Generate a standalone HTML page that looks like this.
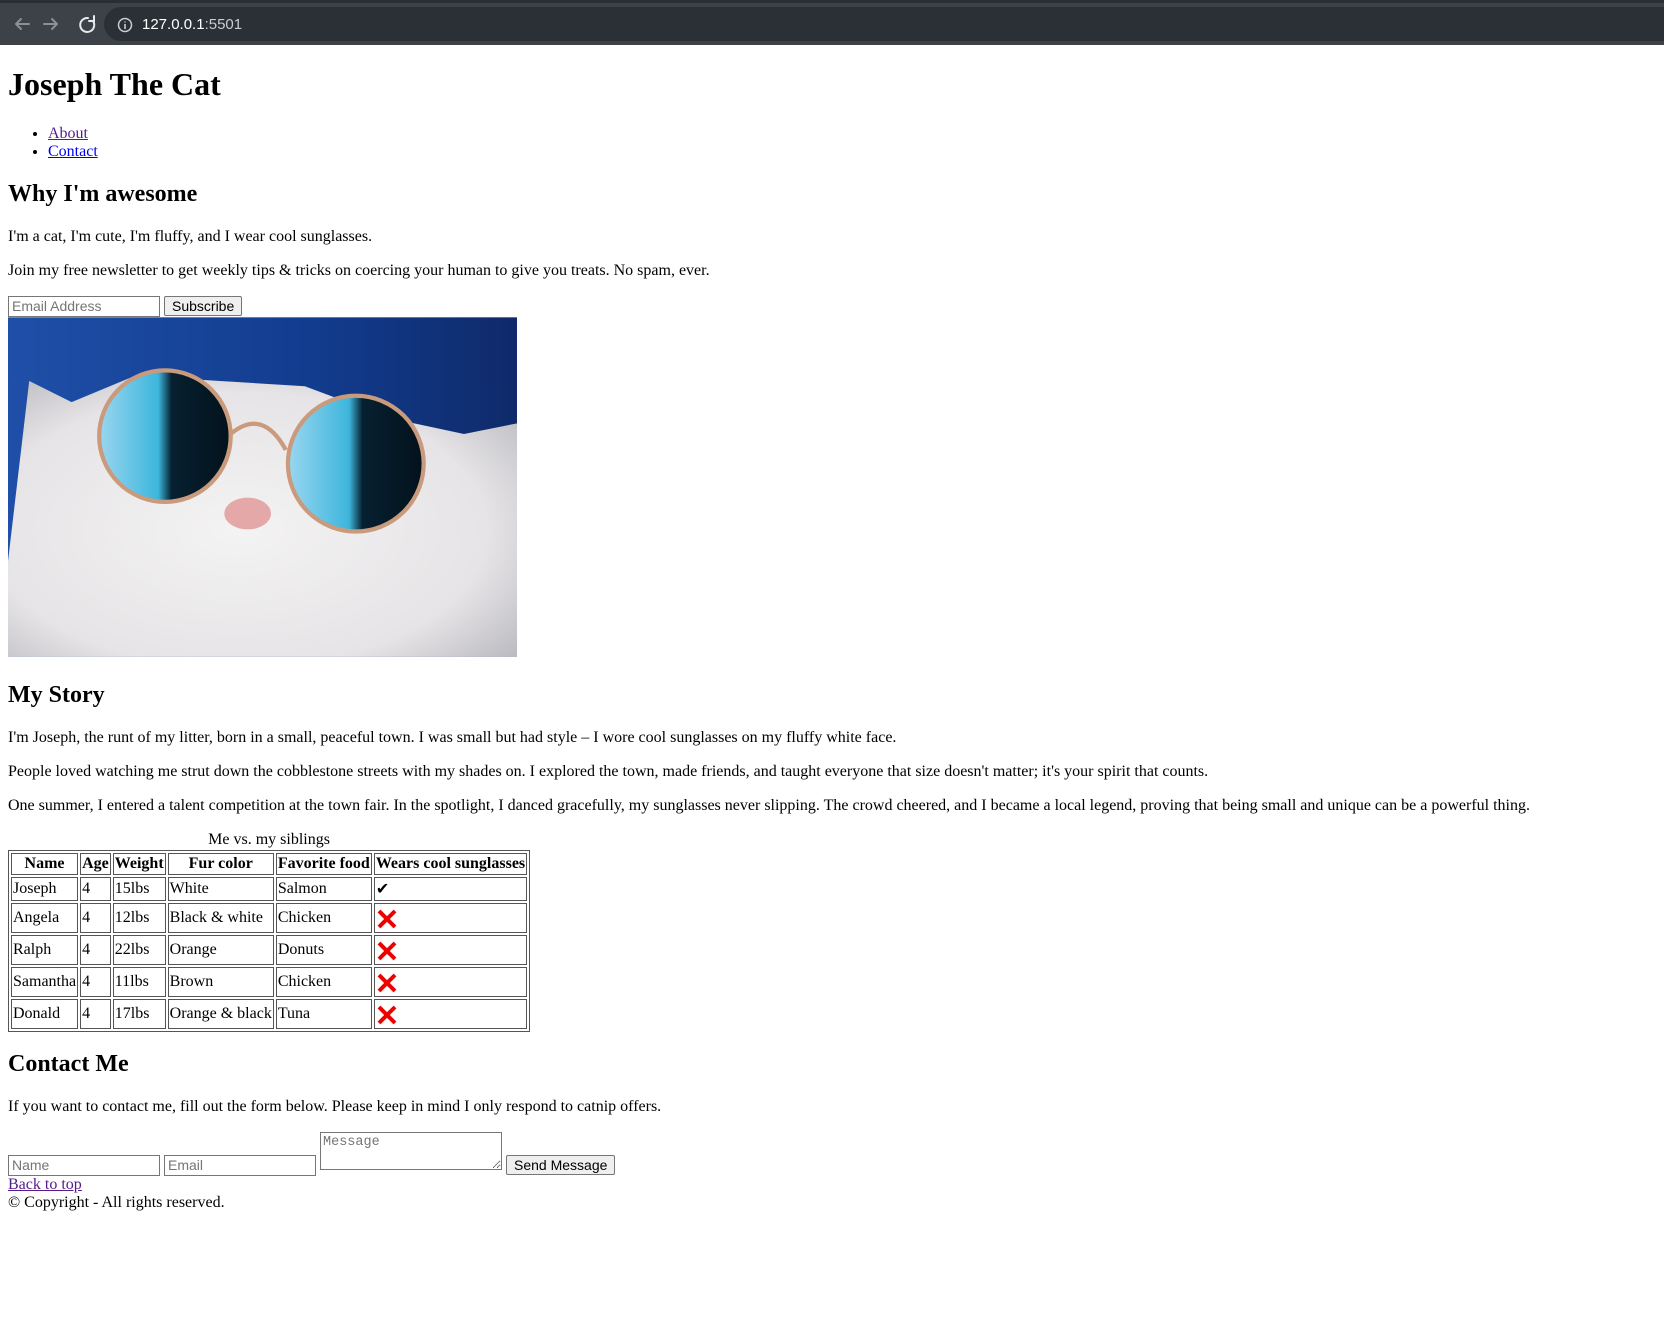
<!DOCTYPE html>
<html><head><meta charset="utf-8"><style>
html,body{margin:0;padding:0;background:#fff}
.bar{height:45px;background:#3c4248;position:relative;border-top:3px solid #2a2e33;box-sizing:border-box}
.pill{position:absolute;left:104px;top:4px;right:0;height:34px;background:#2b3036;border-radius:17px 0 0 17px}
.bar span{position:absolute;color:#c9cdd1;font:15px "Liberation Sans",sans-serif}
.page{margin:8px;font-family:"Liberation Serif",serif;font-size:16px;color:#000}
h1{font-size:2em;margin:.67em 0}
h2{font-size:1.5em;margin:.83em 0}
p{margin:1em 0}
ul{margin:1em 0;padding-left:40px}
a{color:#0000ee}
a.v{color:#551a8b}
input,button,textarea{font-family:"Liberation Sans",sans-serif;font-size:14px;margin:0}
input{border:1px solid #767676;padding:1px 3px;width:144px;height:17px}
button{border:1px solid #767676;border-radius:2px;background:#efefef;padding:1px 7px}
textarea{font-family:"Liberation Mono",monospace;font-size:13.5px;width:176px;height:32px;border:1px solid #767676;padding:2px}
table{border:1px solid #555;border-collapse:separate;border-spacing:2px}
td,th{border:1px solid #555;padding:1px}
caption{padding-bottom:1px}
.x{display:inline-block;width:22px;height:26px;vertical-align:middle}
</style></head><body>
<div class="bar"><div class="pill"></div>
<svg style="position:absolute;left:12px;top:11px" width="90" height="20" viewBox="0 0 90 20" fill="none" stroke-width="2" stroke-linecap="round">
<path d="M4 10h13M4 10l5-5M4 10l5 5" stroke="#8a9096"/>
<path d="M32 10h13M45 10l-5-5M45 10l-5 5" stroke="#8a9096"/>
<path d="M76 4a7 7 0 1 0 5 3" stroke="#e8eaed"/><path d="M82 2v5h-5" stroke="#e8eaed"/>
</svg>
<svg style="position:absolute;left:117px;top:14px" width="16" height="16"><circle cx="8" cy="8" r="6.5" fill="none" stroke="#c9cdd1" stroke-width="1.5"/><path d="M8 7v5M8 4.5v1" stroke="#c9cdd1" stroke-width="1.6"/></svg>
<span style="left:142px;top:13px"><b style="font-weight:normal;color:#fff">127.0.0.1</b>:5501</span>
</div>
<div class="page">
<h1>Joseph The Cat</h1>
<ul><li><a class="v" href="#">About</a></li><li><a href="#">Contact</a></li></ul>
<h2>Why I'm awesome</h2>
<p>I'm a cat, I'm cute, I'm fluffy, and I wear cool sunglasses.</p>
<p>Join my free newsletter to get weekly tips &amp; tricks on coercing your human to give you treats. No spam, ever.</p>
<form><input placeholder="Email Address"> <button type="button">Subscribe</button></form>
<svg width="509" height="340" viewBox="0 0 480 320">
<defs>
<linearGradient id="bg" x1="0" y1="0" x2="1" y2="0"><stop offset="0" stop-color="#1f4fa8"/><stop offset=".6" stop-color="#123c8e"/><stop offset="1" stop-color="#0f2a6a"/></linearGradient>
<radialGradient id="fur" cx=".45" cy=".55" r=".7"><stop offset="0" stop-color="#f4f3f3"/><stop offset=".7" stop-color="#e6e4e6"/><stop offset="1" stop-color="#bdbcc2"/></radialGradient>
<linearGradient id="lens" x1="0" y1="0" x2="1" y2="0"><stop offset="0" stop-color="#9ad6f0"/><stop offset=".45" stop-color="#3db6dc"/><stop offset=".55" stop-color="#062030"/><stop offset="1" stop-color="#03121c"/></linearGradient>
</defs>
<rect width="480" height="320" fill="url(#bg)"/>
<path d="M0 230 L20 60 L60 80 L120 55 L200 60 L280 65 L360 95 L430 110 L480 100 L480 320 L0 320Z" fill="url(#fur)"/>
<circle cx="148" cy="112" r="62" fill="url(#lens)" stroke="#c99a7c" stroke-width="4"/>
<circle cx="328" cy="138" r="64" fill="url(#lens)" stroke="#c99a7c" stroke-width="4"/>
<path d="M210 110 Q240 85 262 125" fill="none" stroke="#c99a7c" stroke-width="4"/>
<ellipse cx="226" cy="185" rx="22" ry="15" fill="#e4a8a8"/>
</svg>
<h2>My Story</h2>
<p>I'm Joseph, the runt of my litter, born in a small, peaceful town. I was small but had style – I wore cool sunglasses on my fluffy white face.</p>
<p>People loved watching me strut down the cobblestone streets with my shades on. I explored the town, made friends, and taught everyone that size doesn't matter; it's your spirit that counts.</p>
<p>One summer, I entered a talent competition at the town fair. In the spotlight, I danced gracefully, my sunglasses never slipping. The crowd cheered, and I became a local legend, proving that being small and unique can be a powerful thing.</p>
<table><caption>Me vs. my siblings</caption>
<tr><th>Name</th><th>Age</th><th>Weight</th><th>Fur color</th><th>Favorite food</th><th>Wears cool sunglasses</th></tr>
<tr><td>Joseph</td><td>4</td><td>15lbs</td><td>White</td><td>Salmon</td><td>✔</td></tr>
<tr><td>Angela</td><td>4</td><td>12lbs</td><td>Black &amp; white</td><td>Chicken</td><td><svg class="x" viewBox="0 0 22 26"><path d="M3 6l16 16M19 6L3 22" stroke="#e00" stroke-width="4"/></svg></td></tr>
<tr><td>Ralph</td><td>4</td><td>22lbs</td><td>Orange</td><td>Donuts</td><td><svg class="x" viewBox="0 0 22 26"><path d="M3 6l16 16M19 6L3 22" stroke="#e00" stroke-width="4"/></svg></td></tr>
<tr><td>Samantha</td><td>4</td><td>11lbs</td><td>Brown</td><td>Chicken</td><td><svg class="x" viewBox="0 0 22 26"><path d="M3 6l16 16M19 6L3 22" stroke="#e00" stroke-width="4"/></svg></td></tr>
<tr><td>Donald</td><td>4</td><td>17lbs</td><td>Orange &amp; black</td><td>Tuna</td><td><svg class="x" viewBox="0 0 22 26"><path d="M3 6l16 16M19 6L3 22" stroke="#e00" stroke-width="4"/></svg></td></tr>
</table>
<h2>Contact Me</h2>
<p>If you want to contact me, fill out the form below. Please keep in mind I only respond to catnip offers.</p>
<form><input placeholder="Name"> <input placeholder="Email"> <textarea placeholder="Message"></textarea> <button type="button">Send Message</button></form>
<a class="v" href="#">Back to top</a><br>
© Copyright - All rights reserved.
</div>
</body></html>
